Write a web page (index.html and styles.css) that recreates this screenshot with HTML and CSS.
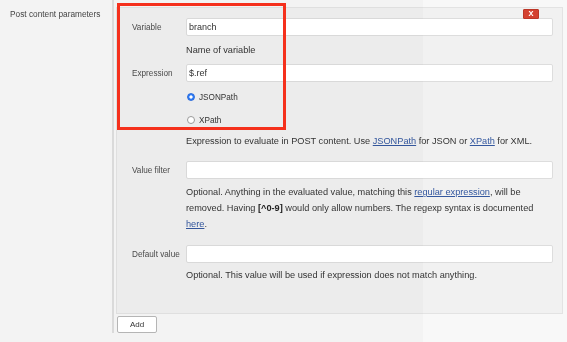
FILE: index.html
```html
<!DOCTYPE html>
<html lang="en">
<head>
    <meta charset="UTF-8">
    <title>Post content parameters</title>
    <link rel="stylesheet" href="styles.css">
</head>
<body>

<div class="page">
    <!-- section label on the left -->
    <div class="side-label">Post content parameters</div>

    <div class="block">
        <div class="panel">
            <button class="remove-btn">X</button>

            <div class="field field-first">
                <label class="field-label">Variable</label>
                <input class="field-input" type="text" value="branch">
            </div>
            <div class="help help-short">Name of variable</div>

            <div class="field field-expr">
                <label class="field-label">Expression</label>
                <input class="field-input" type="text" value="$.ref">
            </div>
            <div class="radio radio-first">
                <span class="radio-dot checked"></span>JSONPath
            </div>
            <div class="radio">
                <span class="radio-dot"></span>XPath
            </div>
            <div class="help help-expr">Expression to evaluate in POST content. Use <a href="#">JSONPath</a> for JSON or <a href="#">XPath</a> for XML.</div>

            <div class="field field-filter">
                <label class="field-label">Value filter</label>
                <input class="field-input" type="text" value="">
            </div>
            <div class="help help-filter">Optional. Anything in the evaluated value, matching this <a href="#">regular expression</a>, will be removed. Having <strong>[^0-9]</strong> would only allow numbers. The regexp syntax is documented <a href="#">here</a>.</div>

            <div class="field field-default">
                <label class="field-label">Default value</label>
                <input class="field-input" type="text" value="">
            </div>
            <div class="help help-default">Optional. This value will be used if expression does not match anything.</div>
        </div>

        <button class="add-btn">Add</button>
    </div>
</div>

<!-- lighter column over the right side of the shot -->
<div class="shade"></div>

<!-- red annotation frame -->
<div class="callout"></div>

</body>
</html>
```

FILE: styles.css
```css
body {
    margin: 0;
    background-color: #f3f3f3;
    font-family: "Liberation Sans", Arial, sans-serif;
    color: #333;
    width: 567px;
    height: 342px;
    overflow: hidden;
    position: relative;
}

.page {
    display: flex;
    align-items: flex-start;
}

.side-label {
    width: 102px;
    padding: 9px 0 0 10px;
    font-size: 8.3px;
    line-height: 10px;
    color: #444;
}

.block {
    flex: 1;
    margin-right: 4px;
    border-left: 2px solid #dadada;
    padding-left: 2px;
}

.panel {
    position: relative;
    margin-top: 7px;
    background-color: #ececec;
    border: 1px solid #dfdfdf;
    padding: 10px 9px 30px 0;
}

.remove-btn {
    position: absolute;
    top: 1px;
    right: 23px;
    width: 16px;
    height: 10px;
    padding: 0;
    border: 1px solid #b83526;
    border-radius: 1px;
    background-color: #d0402f;
    color: #fff;
    font-family: "Liberation Sans", Arial, sans-serif;
    font-size: 7.5px;
    font-weight: bold;
    line-height: 8px;
}

.field {
    display: flex;
    align-items: center;
}

.field-label {
    width: 54px;
    padding-left: 15px;
    font-size: 8.2px;
    color: #4a4a4a;
}

.field-input {
    flex: 1;
    height: 18px;
    box-sizing: border-box;
    margin: 0;
    border: 1px solid #d9d9d9;
    border-radius: 2px;
    background-color: #fff;
    padding: 0 2px;
    font-family: "Liberation Sans", Arial, sans-serif;
    font-size: 9px;
    color: #333;
}

.field-expr {
    margin-top: 6px;
}

.field-filter {
    margin-top: 12px;
}

.field-default {
    margin-top: 13px;
}

.help {
    margin-left: 69px;
    font-size: 9.2px;
    line-height: 16px;
    color: #333;
}

.help a {
    color: #33569c;
}

.help strong {
    color: #222;
}

.help-short {
    margin-top: 6px;
}

.help-expr {
    margin-top: 5px;
}

.help-filter {
    margin-top: 5px;
}

.help-default {
    margin-top: 4px;
}

.radio {
    display: flex;
    align-items: center;
    margin-left: 70px;
    margin-top: 7px;
    height: 16px;
    font-size: 8.2px;
    color: #333;
}

.radio-dot {
    width: 8px;
    height: 8px;
    box-sizing: border-box;
    border: 1px solid #9a9a9a;
    border-radius: 50%;
    background-color: #fff;
    margin-right: 4px;
}

.radio-dot.checked {
    border-color: #2a6bdc;
    background: radial-gradient(circle, #fff 0 1.4px, #2f7cf6 1.8px);
}

.add-btn {
    display: block;
    margin: 2px 0 0 1px;
    width: 40px;
    height: 17px;
    padding: 0;
    background-color: #fff;
    border: 1px solid #b5b5b5;
    border-radius: 2px;
    font-family: "Liberation Sans", Arial, sans-serif;
    font-size: 8px;
    color: #333;
}

/* color-dodge lifts the light greys but leaves dark text almost as is */
.shade {
    position: absolute;
    left: 423px;
    top: 0;
    right: 0;
    bottom: 0;
    background-color: #050505;
    mix-blend-mode: color-dodge;
    pointer-events: none;
}

.callout {
    position: absolute;
    left: 117px;
    top: 3px;
    width: 163px;
    height: 121px;
    border: 3px solid #f5301c;
    pointer-events: none;
}
```
